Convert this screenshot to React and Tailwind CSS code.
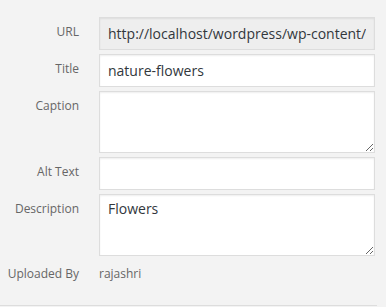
export default function App() {
  const font = { fontFamily: '"Open Sans", "Liberation Sans", sans-serif' };
  const labelCls = "w-[79px] shrink-0 pt-[6px] text-right text-[12px] leading-[18px] text-[#666]";
  const boxCls =
    "w-[276px] border border-[#ddd] px-[8px] text-[14px] leading-[20px] text-[#32373c] outline-none shadow-[inset_0_1px_2px_rgba(0,0,0,0.07)]";

  return (
    <div className="w-[386px] h-[307px] bg-[#f3f3f3] overflow-hidden" style={font}>
      <div className="pt-[17px] pr-[11px] flex flex-col gap-[4px]">
        {/* URL */}
        <div className="flex gap-[20px]">
          <label className={labelCls}>URL</label>
          <input
            readOnly
            value="http://localhost/wordpress/wp-content/uploads/nature-flowers.jpg"
            className={`${boxCls} h-[33px] bg-[#eee]`}
            style={font}
          />
        </div>

        {/* Title */}
        <div className="flex gap-[20px]">
          <label className={labelCls}>Title</label>
          <input
            defaultValue="nature-flowers"
            className={`${boxCls} h-[33px] bg-white`}
            style={font}
          />
        </div>

        {/* Caption */}
        <div className="flex gap-[20px]">
          <label className={labelCls}>Caption</label>
          <textarea className={`${boxCls} h-[62px] py-[4px] bg-white`} style={font} />
        </div>

        {/* Alt Text */}
        <div className="flex gap-[20px]">
          <label className={labelCls}>Alt Text</label>
          <input className={`${boxCls} h-[33px] bg-white`} style={font} />
        </div>

        {/* Description */}
        <div className="flex gap-[20px]">
          <label className={labelCls}>Description</label>
          <textarea
            defaultValue="Flowers"
            className={`${boxCls} h-[62px] py-[4px] bg-white`}
            style={font}
          />
        </div>

        {/* Uploaded By */}
        <div className="flex gap-[20px] mt-[5px] text-[12px] leading-[18px] text-[#666]">
          <span className="w-[79px] shrink-0 text-right">Uploaded By</span>
          <span>rajashri</span>
        </div>
      </div>

      <div className="mt-[22px] w-[377px] border-b border-[#ddd]" />
    </div>
  );
}
